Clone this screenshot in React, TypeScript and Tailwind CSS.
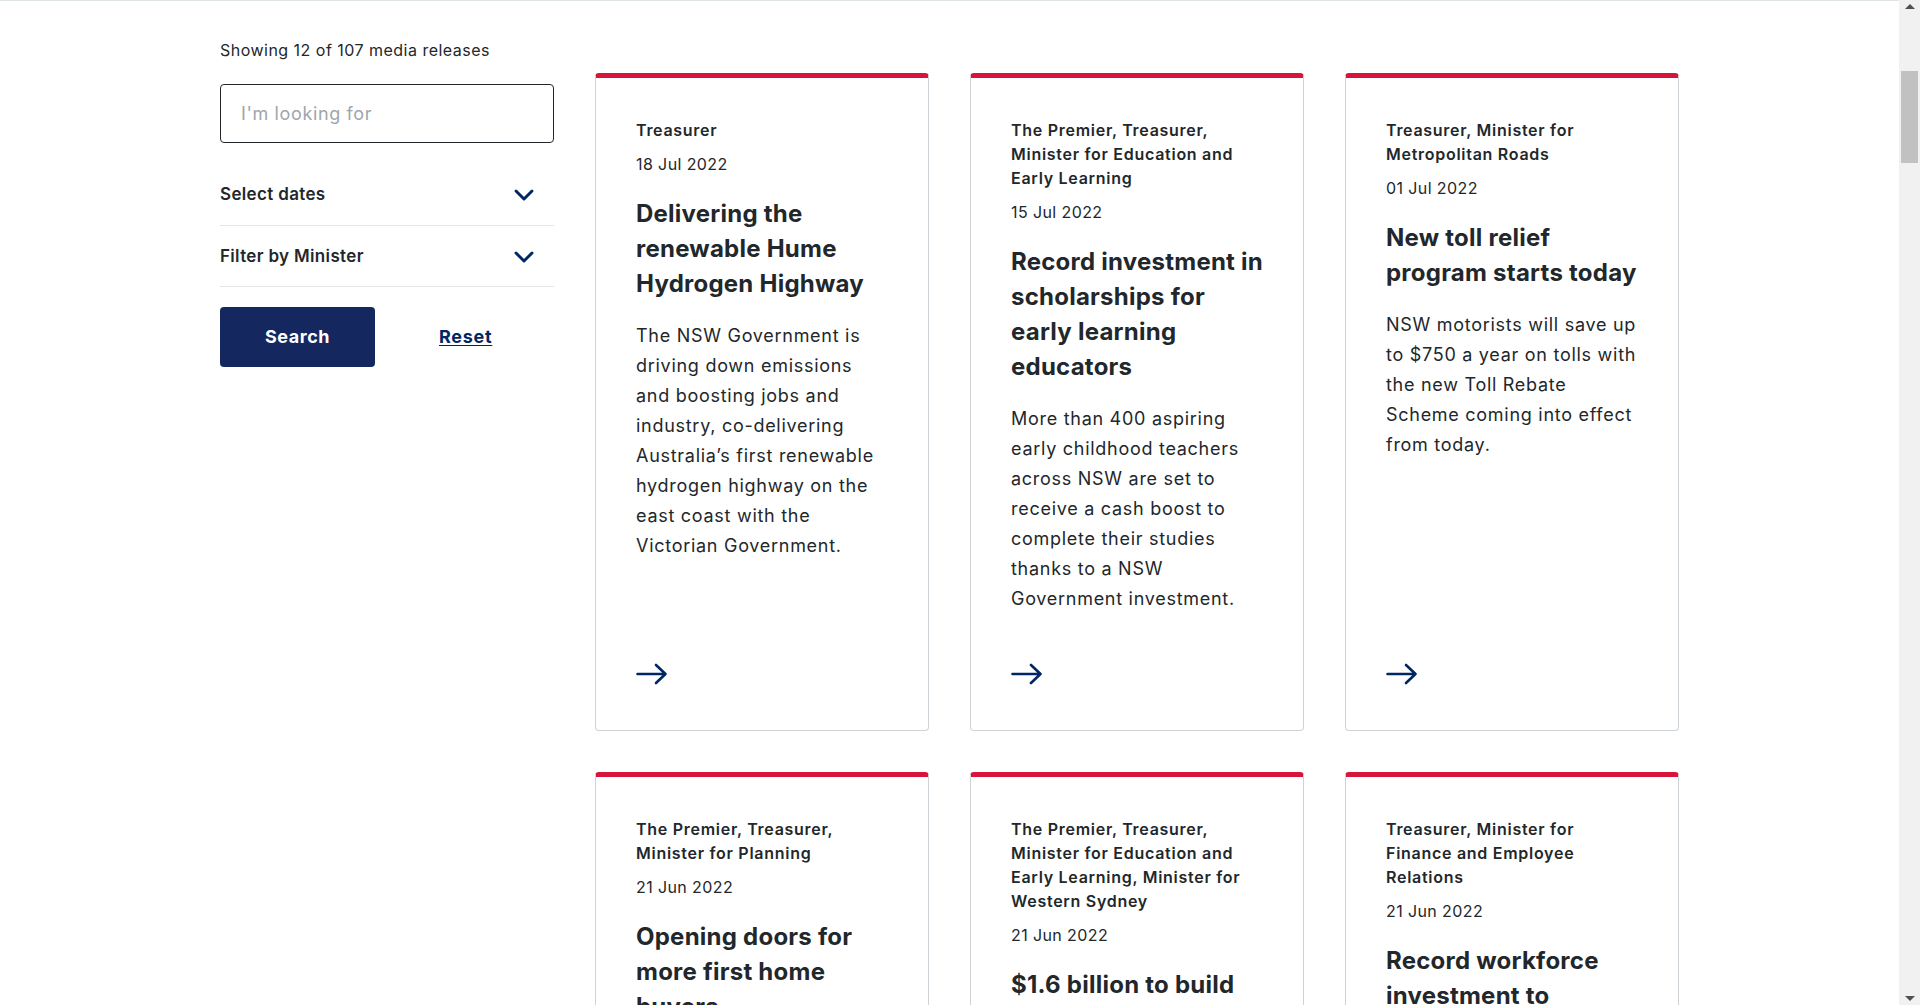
import { ChevronDown } from "lucide-react";

type Release = {
  minister: string;
  date: string;
  title: string;
  summary: string;
};

const releases: Release[] = [
  {
    minister: "Treasurer",
    date: "18 Jul 2022",
    title: "Delivering the renewable Hume Hydrogen Highway",
    summary:
      "The NSW Government is driving down emissions and boosting jobs and industry, co-delivering Australia’s first renewable hydrogen highway on the east coast with the Victorian Government.",
  },
  {
    minister: "The Premier, Treasurer, Minister for Education and Early Learning",
    date: "15 Jul 2022",
    title: "Record investment in scholarships for early learning educators",
    summary:
      "More than 400 aspiring early childhood teachers across NSW are set to receive a cash boost to complete their studies thanks to a NSW Government investment.",
  },
  {
    minister: "Treasurer, Minister for Metropolitan Roads",
    date: "01 Jul 2022",
    title: "New toll relief program starts today",
    summary:
      "NSW motorists will save up to $750 a year on tolls with the new Toll Rebate Scheme coming into effect from today.",
  },
  {
    minister: "The Premier, Treasurer, Minister for Planning",
    date: "21 Jun 2022",
    title: "Opening doors for more first home buyers",
    summary:
      "First home buyers will soon be able to choose between paying stamp duty upfront or a small annual property tax.",
  },
  {
    minister:
      "The Premier, Treasurer, Minister for Education and Early Learning, Minister for Western Sydney",
    date: "21 Jun 2022",
    title: "$1.6 billion to build new schools in Western Sydney",
    summary:
      "The NSW Government will invest $1.6 billion to deliver new and upgraded schools across Western Sydney.",
  },
  {
    minister: "Treasurer, Minister for Finance and Employee Relations",
    date: "21 Jun 2022",
    title: "Record workforce investment to support essential workers",
    summary:
      "The NSW Government is making a record investment in the essential workers who keep our state running.",
  },
];

const Arrow = () => (
  <svg width="32" height="28" viewBox="0 0 32 28" fill="none" className="text-[#002664]">
    <path
      d="M1.5 14H29.5M20 5L29.5 14L20 23"
      stroke="currentColor"
      strokeWidth="2.6"
      strokeLinecap="round"
      strokeLinejoin="round"
    />
  </svg>
);

const ReleaseCard = ({ release }: { release: Release }) => (
  <a
    href="#"
    className="flex flex-col rounded-[4px] border border-[#cdd3d6] border-t-[5px] border-t-[#d7153a] bg-white px-10 pt-10 pb-[42px] text-[#22272b]"
  >
    <p className="text-base leading-6 font-semibold tracking-[0.045em]">{release.minister}</p>
    <p className="mt-[10px] text-base leading-6 tracking-[0.025em]">{release.date}</p>
    <h2 className="mt-5 text-2xl leading-[35px] font-bold tracking-[0.01em]">{release.title}</h2>
    <p className="mt-5 text-lg leading-[30px] tracking-[0.04em]">{release.summary}</p>
    <div className="mt-auto pt-[46px]">
      <Arrow />
    </div>
  </a>
);

// the browser scrollbar seen on the right of the page
const Scrollbar = () => (
  <div className="fixed top-0 right-0 flex h-screen w-[21px] flex-col items-center bg-[#f1f1f1]">
    <div className="mt-[4px] h-0 w-0 border-x-[5px] border-b-[5px] border-x-transparent border-b-[#505050]" />
    <div className="mt-[62px] h-[92px] w-[17px] bg-[#c1c1c1]" />
    <div className="mt-auto mb-[4px] h-0 w-0 border-x-[5px] border-t-[5px] border-x-transparent border-t-[#505050]" />
  </div>
);

const FilterRow = ({ label, className }: { label: string; className: string }) => (
  <div className={`flex items-center justify-between border-b border-[#e4e7ea] pr-[14px] ${className}`}>
    <span className="text-[17px] font-semibold tracking-[0.02em]">{label}</span>
    <ChevronDown size={32} strokeWidth={2.2} className="text-[#002664]" />
  </div>
);

export default function App() {
  return (
    <div
      className="min-h-screen bg-white pr-[21px] text-[#22272b]"
      style={{ fontFamily: "Inter, 'Noto Sans', 'Liberation Sans', sans-serif" }}
    >
      <div className="border-t border-[#dee3e5]">
        <div className="mx-auto w-[1459px] pt-[37px] pb-20">
          <div className="grid grid-cols-[334px_1fr] gap-x-[41px]">
            <aside>
              <p className="text-base leading-6 tracking-[0.03em]">Showing 12 of 107 media releases</p>
              <input
                type="text"
                placeholder="I'm looking for"
                className="mt-[22px] h-[59px] w-full rounded-[4px] border border-[#22272b] px-5 text-lg tracking-[0.035em] text-[#22272b] placeholder:text-[#a0a5ae] outline-none"
              />
              <FilterRow label="Select dates" className="mt-[23px] h-[60px] pb-[2px]" />
              <FilterRow label="Filter by Minister" className="h-[61px] pt-[2px]" />
              <div className="mt-[20px] flex items-center gap-[64px]">
                <button className="h-[60px] w-[155px] rounded-[4px] bg-[#14285f] text-lg font-bold tracking-[0.03em] text-white">
                  Search
                </button>
                <a
                  href="#"
                  className="text-lg font-bold tracking-[0.04em] text-[#002664] underline underline-offset-2"
                >
                  Reset
                </a>
              </div>
            </aside>
            <main className="mt-[35px] grid grid-cols-3 gap-[41px]">
              {releases.map((r) => (
                <ReleaseCard key={r.title} release={r} />
              ))}
            </main>
          </div>
        </div>
      </div>
      <Scrollbar />
    </div>
  );
}
